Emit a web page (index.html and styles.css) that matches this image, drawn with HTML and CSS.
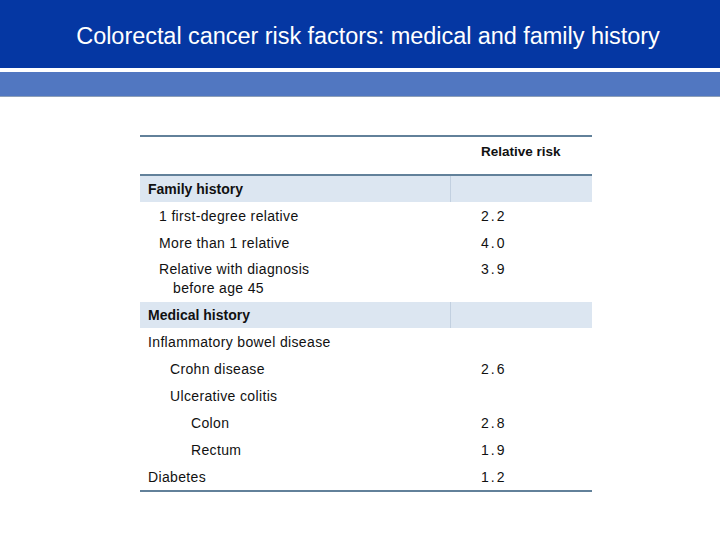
FILE: index.html
```html
<!DOCTYPE html>
<html>
<head>
<meta charset="utf-8">
<link rel="stylesheet" href="styles.css">
</head>
<body>
<header class="title-bar"><h1>Colorectal cancer risk factors: medical and family history</h1></header>
<div class="sub-bar"></div>
<main class="content">
  <div class="risk-table">
    <div class="row head"><div class="c1"></div><div class="c2">Relative risk</div></div>
    <div class="row band"><div class="c1">Family history</div><div class="c2"></div></div>
    <div class="row"><div class="c1 i1">1 first-degree relative</div><div class="c2 num">2.2</div></div>
    <div class="row"><div class="c1 i1">More than 1 relative</div><div class="c2 num">4.0</div></div>
    <div class="row tall"><div class="c1 i1"><span class="line">Relative with diagnosis</span><span class="line hang">before age 45</span></div><div class="c2 num">3.9</div></div>
    <div class="row band"><div class="c1">Medical history</div><div class="c2"></div></div>
    <div class="row"><div class="c1">Inflammatory bowel disease</div><div class="c2"></div></div>
    <div class="row"><div class="c1 i2">Crohn disease</div><div class="c2 num">2.6</div></div>
    <div class="row"><div class="c1 i2">Ulcerative colitis</div><div class="c2"></div></div>
    <div class="row"><div class="c1 i3">Colon</div><div class="c2 num">2.8</div></div>
    <div class="row"><div class="c1 i3">Rectum</div><div class="c2 num">1.9</div></div>
    <div class="row"><div class="c1">Diabetes</div><div class="c2 num">1.2</div></div>
  </div>
</main>
</body>
</html>
```
FILE: styles.css
```css
* { box-sizing: border-box; }
body {
  margin: 0;
  background: #ffffff;
  font-family: "Liberation Sans", Arial, sans-serif;
  color: #111111;
}
.title-bar {
  height: 68px;
  background: #0537a3;
  display: flex;
  align-items: center;
  justify-content: center;
  padding-top: 5px;
}
.title-bar h1 {
  margin: 0;
  padding-left: 16px;
  font-size: 23.5px;
  font-weight: normal;
  color: #ffffff;
  letter-spacing: -0.05px;
}
.sub-bar {
  margin-top: 4px;
  height: 25px;
  background: #5177c1;
  border-bottom: 1px solid #8d9fb8;
}
.content {
  padding-top: 38px;
  padding-left: 140px;
}
.risk-table {
  width: 452px;
  font-size: 14px;
  letter-spacing: 0.35px;
  border-bottom: 2px solid #62819a;
}
.row {
  display: grid;
  grid-template-columns: 310px 142px;
  height: 27px;
}
.row > div { display: flex; align-items: center; }
.c1 { padding-left: 8px; }
.c2 { padding-left: 31px; }
.num { letter-spacing: 2px; }
.head {
  height: 41px;
  border-top: 2px solid #62819a;
  border-bottom: 2px solid #62819a;
  font-weight: bold;
  font-size: 13.5px;
  letter-spacing: 0;
}
.head > div { padding-bottom: 8px; }
.band {
  height: 26px;
  background: #dce6f1;
  font-weight: bold;
  letter-spacing: 0;
}
.band .c2 { border-left: 1px solid #c2d0e0; }
.i1 { padding-left: 19px; }
.i2 { padding-left: 30px; }
.i3 { padding-left: 51px; }
.tall { height: 46px; }
.tall > div {
  flex-direction: column;
  align-items: flex-start;
  justify-content: flex-start;
  padding-top: 4px;
  line-height: 19px;
}
.line { display: block; }
.hang { padding-left: 14px; }
```
